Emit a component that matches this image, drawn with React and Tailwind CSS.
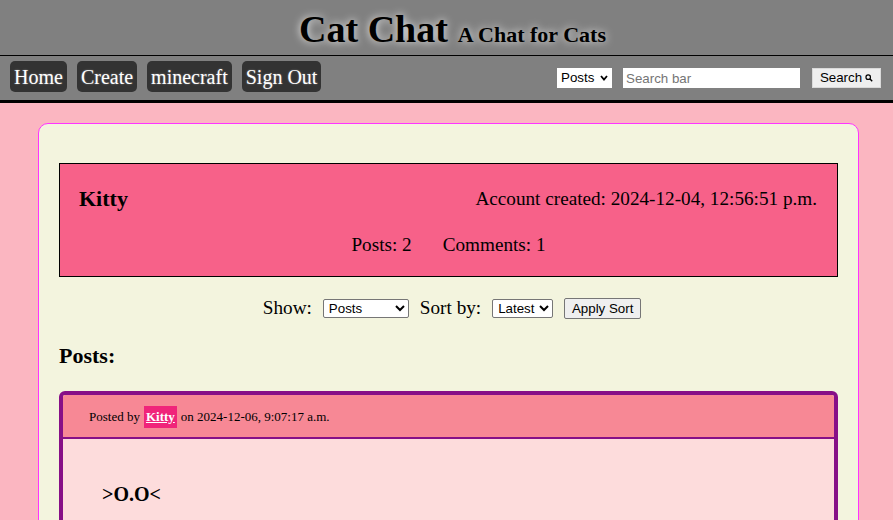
import React from "react";

const serif = { fontFamily: '"Liberation Serif", "Times New Roman", serif' };

function NavButton({ children }) {
  return (
    <a
      href="#"
      className="bg-[#333333] text-white rounded-[5px] px-[4px] h-[31px] flex items-center text-[20px] leading-none [text-shadow:0_0_2px_rgba(255,255,255,0.4)]"
    >
      {children}
    </a>
  );
}

function Header() {
  return (
    <header className="bg-[#808080]">
      <div className="h-[56px] flex items-center justify-center border-b border-black pt-[4px]">
        <h1 className="flex items-baseline font-bold text-black ml-[12px] [text-shadow:0_0_8px_rgba(255,255,255,0.9)]">
          <span className="text-[38px]">Cat Chat</span>
          <span className="text-[22px] ml-[10px]">A Chat for Cats</span>
        </h1>
      </div>
      <nav className="h-[47px] flex items-center justify-between pl-[10px] pr-[12px] border-b-[3px] border-black">
        <div className="flex gap-[10px] -mt-[3px]">
          <NavButton>Home</NavButton>
          <NavButton>Create</NavButton>
          <NavButton>minecraft</NavButton>
          <NavButton>Sign Out</NavButton>
        </div>
        <div
          className="flex items-center text-[13.33px]"
          style={{ fontFamily: '"Liberation Sans", Arial, sans-serif' }}
        >
          <div className="relative h-[20px] w-[55px] bg-white text-black">
            <select className="appearance-none w-full h-full bg-white pl-[4px] pr-[14px]">
              <option>Posts</option>
            </select>
            <svg
              className="absolute right-[4px] top-[7px] pointer-events-none"
              width="8"
              height="6"
              viewBox="0 0 8 6"
              fill="none"
            >
              <path d="M1 1 L4 4.5 L7 1" stroke="black" strokeWidth="1.8" />
            </svg>
          </div>
          <input
            type="text"
            placeholder="Search bar"
            className="ml-[11px] bg-white h-[20px] w-[177px] px-[3px] placeholder:text-[#757575]"
          />
          <button className="ml-[12px] bg-[#efefef] h-[20px] w-[69px] border border-[#dadada] flex items-center justify-center gap-[3px] text-black">
            Search
            <svg width="8" height="8" viewBox="0 0 10 10" fill="none">
              <circle cx="4" cy="4" r="2.8" stroke="black" strokeWidth="1.5" />
              <path d="M6 6 L9 9" stroke="black" strokeWidth="1.8" />
            </svg>
          </button>
        </div>
      </nav>
    </header>
  );
}

function ProfileBox() {
  return (
    <section className="bg-[#f76189] border border-black px-[19px] pt-[23px] pb-[20px]">
      <div className="h-[24px] flex items-center justify-between">
        <h2 className="text-[22px] font-bold leading-none">Kitty</h2>
        <p className="text-[19.2px] leading-none pr-[1px]">
          Account created: 2024-12-04, 12:56:51 p.m.
        </p>
      </div>
      <div className="mt-[23px] h-[22px] flex items-center justify-center gap-[31px] text-[19.2px]">
        <span>Posts: 2</span>
        <span>Comments: 1</span>
      </div>
    </section>
  );
}

function SortRow() {
  const ctl = '"Liberation Sans", Arial, sans-serif';
  return (
    <div className="mt-[21px] h-[20px] flex items-center justify-center gap-[11px] pl-[7px] text-[19.2px]">
      <span>Show:</span>
      <select
        className="bg-white h-[19px] w-[86px] border border-[#767676] rounded-[2px] text-[13.33px] px-[1px]"
        style={{ fontFamily: ctl }}
      >
        <option>Posts</option>
      </select>
      <span>Sort by:</span>
      <select
        className="bg-white h-[19px] w-[61px] border border-[#767676] rounded-[2px] text-[13.33px] px-[1px]"
        style={{ fontFamily: ctl }}
      >
        <option>Latest</option>
      </select>
      <button
        className="bg-[#efefef] h-[21px] w-[77px] border border-[#767676] rounded-[2px] text-[13.33px]"
        style={{ fontFamily: ctl }}
      >
        Apply Sort
      </button>
    </div>
  );
}

function PostCard() {
  return (
    <article className="mt-[23px] border-4 border-[#870f87] rounded-t-[6px] overflow-hidden">
      <div className="bg-[#f78895] h-[44px] flex items-center pl-[26px] pt-[2px] text-[13px] border-b-2 border-[#870f87]">
        <span>Posted by</span>
        <a
          href="#"
          className="ml-[4px] bg-[#f0247a] text-white font-bold underline px-[2px] py-[1px]"
        >
          Kitty
        </a>
        <span className="ml-[4px]">on 2024-12-06, 9:07:17 a.m.</span>
      </div>
      <div className="bg-[#fddcdc] pl-[39px] pt-[40px] h-[200px]">
        <h3 className="text-[20px] font-bold">&gt;O.O&lt;</h3>
      </div>
    </article>
  );
}

export default function App() {
  return (
    <div className="min-h-[520px] bg-[#fbb6c1] text-black" style={serif}>
      <Header />
      <main className="pt-[20px] pb-[40px]">
        <div className="ml-[38px] w-[821px] bg-[#f3f4de] border border-[#ff33ff] rounded-[10px] px-[20px] pt-[39px] pb-[20px]">
          <ProfileBox />
          <SortRow />
          <h2 className="mt-[24px] h-[26px] flex items-center text-[22px] font-bold">
            Posts:
          </h2>
          <PostCard />
        </div>
      </main>
    </div>
  );
}
